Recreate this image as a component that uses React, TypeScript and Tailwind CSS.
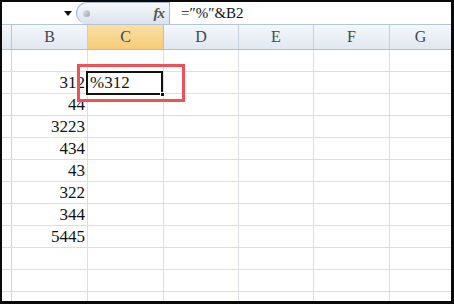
import React from "react";

const cols = [
  { k: "B", w: "w-[76px]" },
  { k: "C", w: "w-[76px]" },
  { k: "D", w: "w-[75px]" },
  { k: "E", w: "w-[75px]" },
  { k: "F", w: "w-[76px]" },
];

const bValues: Record<number, string> = {
  1: "312",
  2: "44",
  3: "3223",
  4: "434",
  5: "43",
  6: "322",
  7: "344",
  8: "5445",
};

export default function App() {
  const rows = Array.from({ length: 12 }, (_, i) => i);
  return (
    <div
      className="w-[454px] h-[304px] bg-[#0a0a0a] pt-[2px] pl-[2px] pr-[3px] pb-[3px] overflow-hidden"
      style={{ fontFamily: '"Liberation Serif", "DejaVu Serif", serif' }}
    >
      <div className="w-full h-full bg-white flex flex-col overflow-hidden">
        {/* formula bar */}
        <div className="h-[23px] shrink-0 flex border-b border-[#b4c5da] bg-white">
          <div className="w-[74px] shrink-0 flex items-center justify-end pr-[4px]">
            <svg width="8" height="5" viewBox="0 0 8 5">
              <path d="M0 0 L8 0 L4 5 Z" fill="#111" />
            </svg>
          </div>
          <div className="w-[94px] shrink-0 relative rounded-l-[11px] border border-b-0 border-[#a6b9d1] bg-gradient-to-b from-[#f6f8fb] to-[#dbe3ee] flex items-center">
            <div className="ml-[6px] w-[7px] h-[7px] rounded-full bg-gradient-to-br from-[#e2e6ec] to-[#9aa3ae]" />
            <div className="ml-auto mr-[5px] text-[15px] italic text-[#555] leading-none font-bold tracking-[-1px]">
              fx
            </div>
          </div>
          <div className="flex-1 flex items-center pl-[11px] text-[15px] text-[#111] leading-none">
            =″%″&amp;B2
          </div>
        </div>
        {/* header row */}
        <div className="h-[25px] shrink-0 flex border-b border-[#aebfd4]">
          <div className="w-[10px] shrink-0 border-r border-[#b7c5d6] bg-gradient-to-b from-[#f4f7fb] to-[#e1e8f1]" />
          {cols.map((c) =>
            c.k === "C" ? (
              <div
                key={c.k}
                className={`${c.w} shrink-0 border-r border-[#f0b65e] bg-gradient-to-b from-[#f9dfa5] to-[#f6cc78] flex items-center justify-center text-[16px] text-[#3d4756]`}
              >
                {c.k}
              </div>
            ) : (
              <div
                key={c.k}
                className={`${c.w} shrink-0 border-r border-[#c3cfdd] bg-gradient-to-b from-[#f4f7fb] to-[#e1e8f1] flex items-center justify-center text-[16px] text-[#3d4756]`}
              >
                {c.k}
              </div>
            )
          )}
          <div className="flex-1 bg-gradient-to-b from-[#f4f7fb] to-[#e1e8f1] flex items-center justify-center text-[16px] text-[#3d4756]">
            G
          </div>
        </div>
        {/* data rows */}
        {rows.map((r) => (
          <div key={r} className="h-[22px] shrink-0 flex border-b border-[#dcdde8]">
            <div className="w-[10px] shrink-0 border-r border-[#cfd3e0]" />
            <div className="w-[76px] shrink-0 border-r border-[#dcdde8] flex items-center justify-end pr-[2px] text-[17px] text-[#111] leading-none">
              {bValues[r] ?? ""}
            </div>
            <div className="w-[76px] shrink-0 border-r border-[#dcdde8] relative flex items-center pl-[2px] text-[17px] text-[#111] leading-none">
              {r === 1 && (
                <>
                  <span className="relative z-10">%312</span>
                  <div className="absolute left-[-2px] top-[-1px] w-[77px] h-[24px] border-2 border-[#111] z-20">
                    <div className="absolute right-[-4px] bottom-[-4px] w-[5px] h-[5px] bg-[#111] border border-white" />
                  </div>
                  <div className="absolute left-[-11px] top-[-8px] w-[108px] h-[38px] border-[3px] border-[#ee5256] z-30" />
                </>
              )}
            </div>
            <div className="w-[75px] shrink-0 border-r border-[#dcdde8]" />
            <div className="w-[75px] shrink-0 border-r border-[#dcdde8]" />
            <div className="w-[76px] shrink-0 border-r border-[#dcdde8]" />
            <div className="flex-1" />
          </div>
        ))}
      </div>
    </div>
  );
}
